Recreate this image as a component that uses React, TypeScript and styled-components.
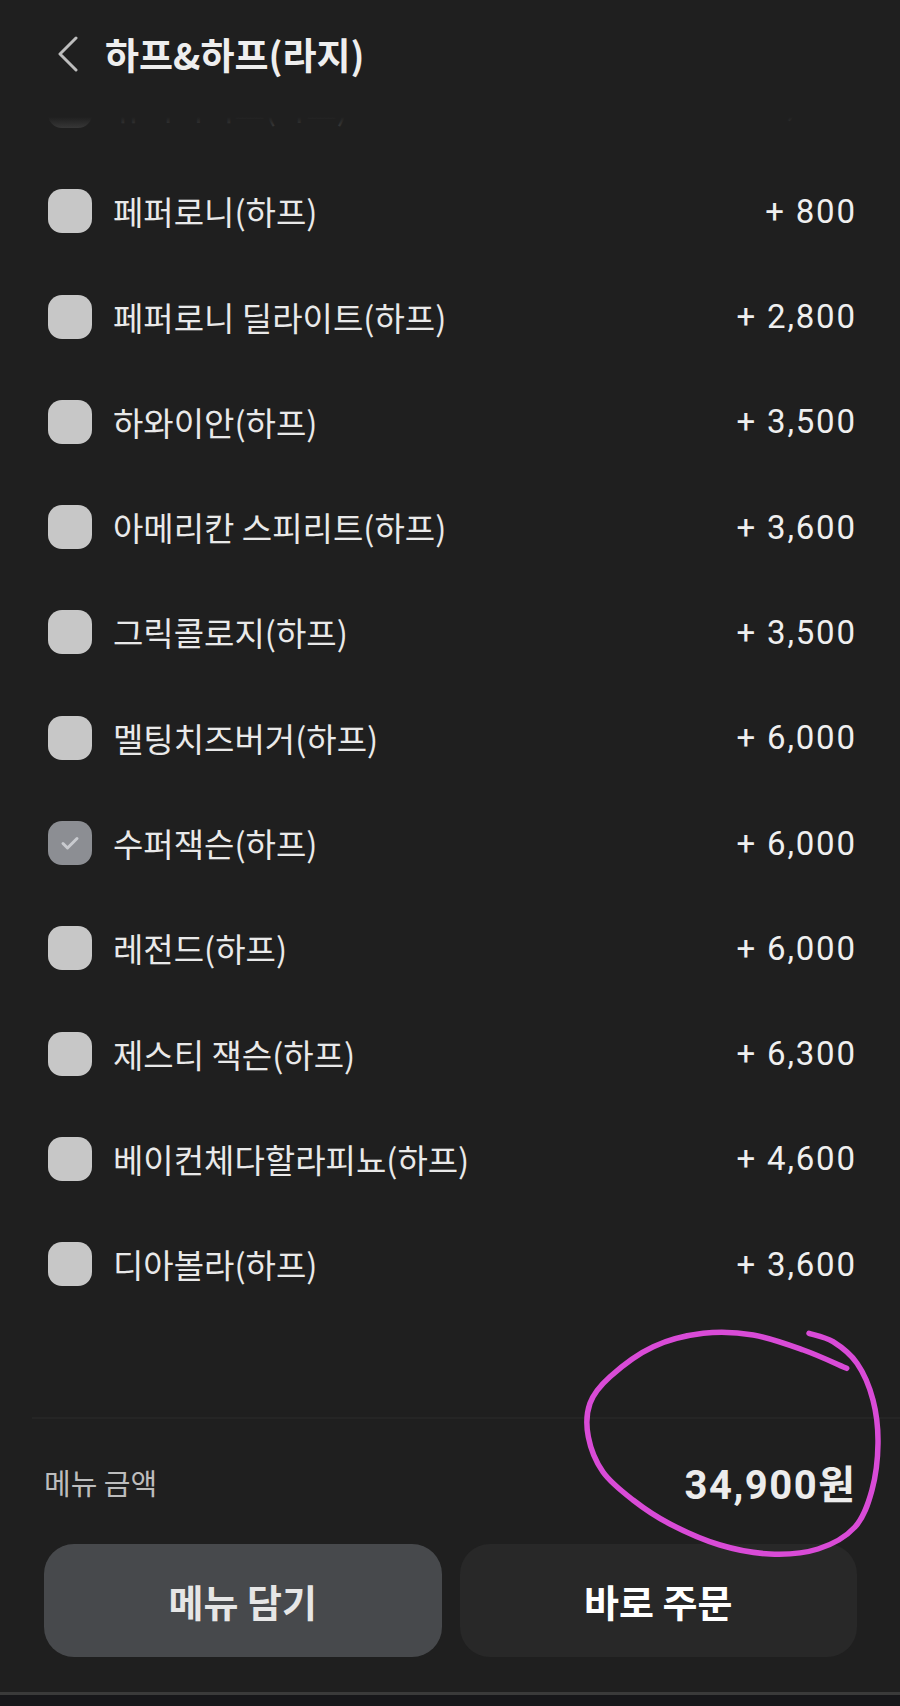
import React from 'react';
import styled, { createGlobalStyle } from 'styled-components';

type Topping = { name: string; price: string; checked?: boolean };

const toppings: Topping[] = [
  { name: '슈퍼디럭스(하프)', price: '+ 2,000' },
  { name: '페퍼로니(하프)', price: '+ 800' },
  { name: '페퍼로니 딜라이트(하프)', price: '+ 2,800' },
  { name: '하와이안(하프)', price: '+ 3,500' },
  { name: '아메리칸 스피리트(하프)', price: '+ 3,600' },
  { name: '그릭콜로지(하프)', price: '+ 3,500' },
  { name: '멜팅치즈버거(하프)', price: '+ 6,000' },
  { name: '수퍼잭슨(하프)', price: '+ 6,000', checked: true },
  { name: '레전드(하프)', price: '+ 6,000' },
  { name: '제스티 잭슨(하프)', price: '+ 6,300' },
  { name: '베이컨체다할라피뇨(하프)', price: '+ 4,600' },
  { name: '디아볼라(하프)', price: '+ 3,600' },
];

// hand-drawn marker loop around the total
const loop: [number, number][] = [
  [271.7, 48.3], [228.3, 30], [178.3, 15], [128.3, 13.3], [78.3, 26.7],
  [35, 56.7], [15, 83.3], [13.3, 116.7], [28, 152], [58, 180],
  [95, 204], [145, 225], [195, 234], [243, 229], [280, 207],
  [297, 170], [303, 123.3], [298, 80], [282, 43.3], [258, 21.7],
  [234, 13.3],
];

const smoothPath = (pts: [number, number][]) => {
  let d = `M${pts[0][0]},${pts[0][1]}`;
  for (let i = 0; i < pts.length - 1; i++) {
    const p0 = pts[i - 1] || pts[i];
    const p1 = pts[i];
    const p2 = pts[i + 1];
    const p3 = pts[i + 2] || p2;
    const c1x = p1[0] + (p2[0] - p0[0]) / 6;
    const c1y = p1[1] + (p2[1] - p0[1]) / 6;
    const c2x = p2[0] - (p3[0] - p1[0]) / 6;
    const c2y = p2[1] - (p3[1] - p1[1]) / 6;
    d += ` C${c1x.toFixed(1)},${c1y.toFixed(1)} ${c2x.toFixed(1)},${c2y.toFixed(1)} ${p2[0]},${p2[1]}`;
  }
  return d;
};

const App = () => {
  return (
    <Page>
      <GlobalStyle />
      <Header>
        <BackButton aria-label="back">
          <svg width="22" height="36" viewBox="0 0 22 36" fill="none">
            <path d="M19 2L3 18l16 16" stroke="#bdbdbd" strokeWidth="3" strokeLinecap="round" strokeLinejoin="round" />
          </svg>
        </BackButton>
        <Title>하프&하프(라지)</Title>
      </Header>

      <List>
        <ListInner>
          {toppings.map((t) => (
            <Row key={t.name}>
              <Check $checked={t.checked}>
                {t.checked && (
                  <svg width="22" height="22" viewBox="0 0 22 22" fill="none">
                    <path d="M4 11.5l4.5 4.5L18 6.5" stroke="#c9cbcf" strokeWidth="3" strokeLinecap="round" strokeLinejoin="round" />
                  </svg>
                )}
              </Check>
              <Name>{t.name}</Name>
              <Price>{t.price}</Price>
            </Row>
          ))}
        </ListInner>
      </List>

      <Footer>
        <Summary>
          <SummaryLabel>메뉴 금액</SummaryLabel>
          <Total>34,900원</Total>
          <Marker width="320" height="250" viewBox="0 0 320 250" fill="none">
            <path d={smoothPath(loop)} stroke="#d94bd7" strokeWidth="5.5" strokeLinecap="round" strokeLinejoin="round" />
          </Marker>
        </Summary>
        <Buttons>
          <ActionButton $variant="cart">메뉴 담기</ActionButton>
          <ActionButton $variant="order">바로 주문</ActionButton>
        </Buttons>
      </Footer>
      <NavBar />
    </Page>
  );
};

const GlobalStyle = createGlobalStyle`
  html, body {
    margin: 0;
    padding: 0;
    background: #1f1f1f;
  }
  * {
    box-sizing: border-box;
  }
`;

const Page = styled.div`
  width: 900px;
  height: 1706px;
  display: flex;
  flex-direction: column;
  background: #1f1f1f;
  color: #ececec;
  font-family: 'Noto Sans CJK KR', 'Noto Sans', sans-serif;
  overflow: hidden;
`;

const Header = styled.header`
  height: 117px;
  flex-shrink: 0;
  display: flex;
  align-items: center;
  padding: 0 0 9px 57px;
  background: #1f1f1f;
  position: relative;
  z-index: 1;

  /* list fades out as it scrolls under the bar */
  &::after {
    content: '';
    position: absolute;
    left: 0;
    right: 0;
    top: 100%;
    height: 14px;
    background: linear-gradient(to bottom, #1f1f1f 0%, rgba(31, 31, 31, 0.82) 100%);
  }
`;

const BackButton = styled.button`
  width: 26px;
  height: 40px;
  border: none;
  background: none;
  padding: 0;
  display: flex;
  align-items: center;
  margin-right: 22px;
  cursor: pointer;
`;

const Title = styled.h1`
  margin: 0;
  font-size: 37px;
  font-weight: 700;
  color: #eeeeee;
`;

const List = styled.div`
  flex: 1;
  overflow: hidden;
`;

const ListInner = styled.div`
  margin-top: -63.7px;
  padding: 0 45px 0 48px;
`;

const Row = styled.div`
  height: 105.3px;
  display: flex;
  align-items: center;
`;

const Check = styled.span<{ $checked?: boolean }>`
  width: 44px;
  height: 44px;
  flex-shrink: 0;
  border-radius: 14px;
  background: ${({ $checked }) => ($checked ? '#8c8e93' : '#c7c7c7')};
  display: flex;
  align-items: center;
  justify-content: center;
  margin-right: 21px;
`;

const Name = styled.span`
  flex: 1;
  font-size: 33px;
  font-weight: 400;
  color: #e9e9e9;
`;

const Price = styled.span`
  font-family: Roboto, 'Noto Sans CJK KR', sans-serif;
  font-size: 33px;
  letter-spacing: 1.8px;
  margin-right: -1.8px;
  color: #efefef;
`;

const Footer = styled.footer`
  height: 275px;
  flex-shrink: 0;
  border-top: 2px solid #252525;
  margin-left: 32px;
  display: flex;
  flex-direction: column;
`;

const Summary = styled.div`
  height: 125px;
  display: flex;
  align-items: center;
  justify-content: space-between;
  padding: 0 45px 0 12px;
  position: relative;
`;

const SummaryLabel = styled.span`
  font-size: 29px;
  color: #bdbdbd;
`;

const Total = styled.span`
  font-family: Roboto, 'Noto Sans CJK KR', sans-serif;
  font-size: 40px;
  font-weight: 700;
  letter-spacing: 1.5px;
  margin-right: -1.5px;
  color: #ececec;
`;

const Marker = styled.svg`
  position: absolute;
  left: 543px;
  top: -99px;
  pointer-events: none;
`;

const Buttons = styled.div`
  display: flex;
  gap: 18px;
  padding: 0 43px 0 12px;
`;

const ActionButton = styled.button<{ $variant: 'cart' | 'order' }>`
  flex: 1;
  height: 113px;
  border: none;
  border-radius: 30px;
  background: ${({ $variant }) => ($variant === 'cart' ? '#47494c' : '#282828')};
  color: ${({ $variant }) => ($variant === 'cart' ? '#e6e6e6' : '#ffffff')};
  font-family: 'Noto Sans CJK KR', sans-serif;
  font-size: 38px;
  font-weight: 700;
  cursor: pointer;
`;

const NavBar = styled.div`
  height: 14px;
  flex-shrink: 0;
  border-top: 3px solid #3a3a3a;
  background: #17171a;
`;

export default App;
